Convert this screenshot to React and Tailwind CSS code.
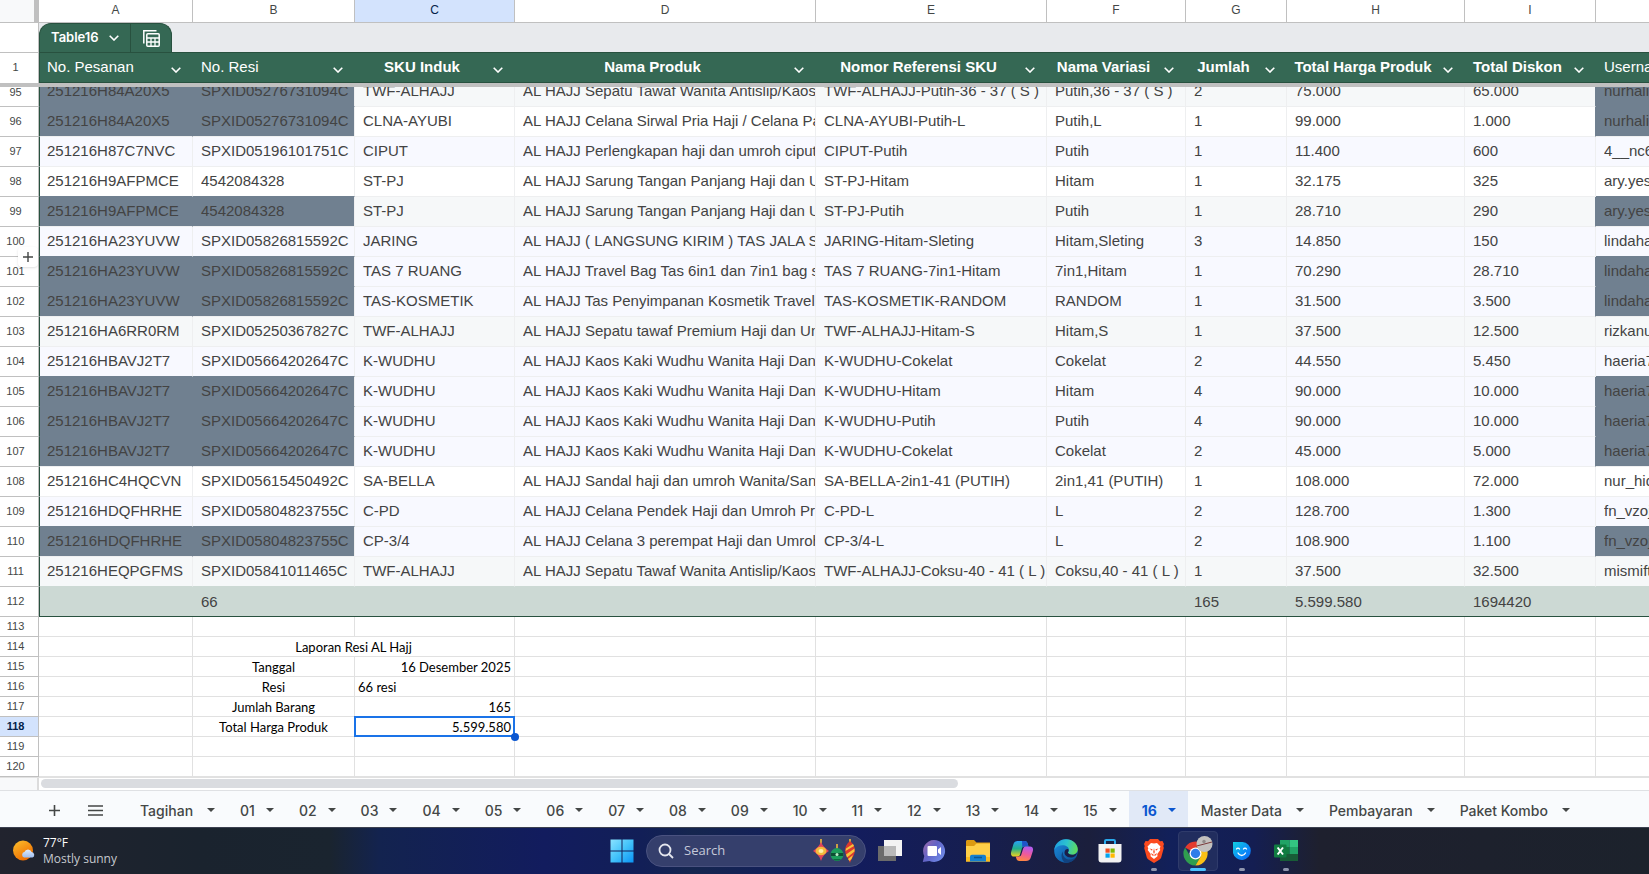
import clsx from 'clsx'

const columns = [
  { id: 'A', label: 'No. Pesanan', width: 'w-[154px]' },
  { id: 'B', label: 'No. Resi', width: 'w-[162px]' },
  { id: 'C', label: 'SKU Induk', width: 'w-[160px]', bold: true },
  { id: 'D', label: 'Nama Produk', width: 'w-[301px]', bold: true },
  { id: 'E', label: 'Nomor Referensi SKU', width: 'w-[231px]', bold: true },
  { id: 'F', label: 'Nama Variasi', width: 'w-[139px]', bold: true },
  { id: 'G', label: 'Jumlah', width: 'w-[101px]', bold: true },
  { id: 'H', label: 'Total Harga Produk', width: 'w-[178px]', bold: true },
  { id: 'I', label: 'Total Diskon', width: 'w-[131px]', bold: true },
  { id: 'J', label: 'Username (Pembeli)', width: 'w-[180px]' },
]

const bands = {
  gray: 'bg-[#f6f8f9]',
  white: 'bg-white',
  lilac: 'bg-[#f8f9ff]',
}

// dup = same order number as the row above, its key cells are filled in slate
const orders = [
  { n: 95, band: 'gray', dup: true, cells: ['251216H84A20X5', 'SPXID05276731094C', 'TWF-ALHAJJ', 'AL HAJJ Sepatu Tawaf Wanita Antislip/Kaos', 'TWF-ALHAJJ-Putih-36 - 37 ( S )', 'Putih,36 - 37 ( S )', '2', '75.000', '65.000', 'nurhaliz'] },
  { n: 96, band: 'white', dup: true, cells: ['251216H84A20X5', 'SPXID05276731094C', 'CLNA-AYUBI', 'AL HAJJ Celana Sirwal Pria Haji / Celana Pa', 'CLNA-AYUBI-Putih-L', 'Putih,L', '1', '99.000', '1.000', 'nurhaliz'] },
  { n: 97, band: 'lilac', cells: ['251216H87C7NVC', 'SPXID05196101751C', 'CIPUT', 'AL HAJJ Perlengkapan haji dan umroh ciput', 'CIPUT-Putih', 'Putih', '1', '11.400', '600', '4__nc6'] },
  { n: 98, band: 'white', cells: ['251216H9AFPMCE', '4542084328', 'ST-PJ', 'AL HAJJ Sarung Tangan Panjang Haji dan U', 'ST-PJ-Hitam', 'Hitam', '1', '32.175', '325', 'ary.yes'] },
  { n: 99, band: 'gray', dup: true, cells: ['251216H9AFPMCE', '4542084328', 'ST-PJ', 'AL HAJJ Sarung Tangan Panjang Haji dan U', 'ST-PJ-Putih', 'Putih', '1', '28.710', '290', 'ary.yes'] },
  { n: 100, band: 'lilac', cells: ['251216HA23YUVW', 'SPXID05826815592C', 'JARING', 'AL HAJJ ( LANGSUNG KIRIM ) TAS JALA SA', 'JARING-Hitam-Sleting', 'Hitam,Sleting', '3', '14.850', '150', 'lindaha'] },
  { n: 101, band: 'lilac', dup: true, cells: ['251216HA23YUVW', 'SPXID05826815592C', 'TAS 7 RUANG', 'AL HAJJ Travel Bag Tas 6in1 dan 7in1 bag se', 'TAS 7 RUANG-7in1-Hitam', '7in1,Hitam', '1', '70.290', '28.710', 'lindaha'] },
  { n: 102, band: 'lilac', dup: true, cells: ['251216HA23YUVW', 'SPXID05826815592C', 'TAS-KOSMETIK', 'AL HAJJ Tas Penyimpanan Kosmetik Travel J', 'TAS-KOSMETIK-RANDOM', 'RANDOM', '1', '31.500', '3.500', 'lindaha'] },
  { n: 103, band: 'gray', cells: ['251216HA6RR0RM', 'SPXID05250367827C', 'TWF-ALHAJJ', 'AL HAJJ Sepatu tawaf Premium Haji dan Um', 'TWF-ALHAJJ-Hitam-S', 'Hitam,S', '1', '37.500', '12.500', 'rizkanu'] },
  { n: 104, band: 'lilac', cells: ['251216HBAVJ2T7', 'SPXID05664202647C', 'K-WUDHU', 'AL HAJJ Kaos Kaki Wudhu Wanita Haji Dan', 'K-WUDHU-Cokelat', 'Cokelat', '2', '44.550', '5.450', 'haeria7'] },
  { n: 105, band: 'lilac', dup: true, cells: ['251216HBAVJ2T7', 'SPXID05664202647C', 'K-WUDHU', 'AL HAJJ Kaos Kaki Wudhu Wanita Haji Dan', 'K-WUDHU-Hitam', 'Hitam', '4', '90.000', '10.000', 'haeria7'] },
  { n: 106, band: 'lilac', dup: true, cells: ['251216HBAVJ2T7', 'SPXID05664202647C', 'K-WUDHU', 'AL HAJJ Kaos Kaki Wudhu Wanita Haji Dan', 'K-WUDHU-Putih', 'Putih', '4', '90.000', '10.000', 'haeria7'] },
  { n: 107, band: 'lilac', dup: true, cells: ['251216HBAVJ2T7', 'SPXID05664202647C', 'K-WUDHU', 'AL HAJJ Kaos Kaki Wudhu Wanita Haji Dan', 'K-WUDHU-Cokelat', 'Cokelat', '2', '45.000', '5.000', 'haeria7'] },
  { n: 108, band: 'white', cells: ['251216HC4HQCVN', 'SPXID05615450492C', 'SA-BELLA', 'AL HAJJ Sandal haji dan umroh Wanita/Sand', 'SA-BELLA-2in1-41 (PUTIH)', '2in1,41 (PUTIH)', '1', '108.000', '72.000', 'nur_hid'] },
  { n: 109, band: 'lilac', cells: ['251216HDQFHRHE', 'SPXID05804823755C', 'C-PD', 'AL HAJJ Celana Pendek Haji dan Umroh Pria', 'C-PD-L', 'L', '2', '128.700', '1.300', 'fn_vzoj'] },
  { n: 110, band: 'lilac', dup: true, cells: ['251216HDQFHRHE', 'SPXID05804823755C', 'CP-3/4', 'AL HAJJ Celana 3 perempat Haji dan Umroh', 'CP-3/4-L', 'L', '2', '108.900', '1.100', 'fn_vzoj'] },
  { n: 111, band: 'gray', cells: ['251216HEQPGFMS', 'SPXID05841011465C', 'TWF-ALHAJJ', 'AL HAJJ Sepatu Tawaf Wanita Antislip/Kaos', 'TWF-ALHAJJ-Coksu-40 - 41 ( L )', 'Coksu,40 - 41 ( L )', '1', '37.500', '32.500', 'mismift'] },
]

const totals = ['', '66', '', '', '', '', '165', '5.599.580', '1694420', '']

const report = [
  { n: 113 },
  { n: 114, title: 'Laporan Resi AL Hajj' },
  { n: 115, label: 'Tanggal', value: '16 Desember 2025' },
  { n: 116, label: 'Resi', value: '66 resi', left: true },
  { n: 117, label: 'Jumlah Barang', value: '165' },
  { n: 118, label: 'Total Harga Produk', value: '5.599.580', selected: true },
  { n: 119 },
  { n: 120 },
]

const sheets = ['Tagihan', '01', '02', '03', '04', '05', '06', '07', '08', '09', '10', '11', '12', '13', '14', '15', '16', 'Master Data', 'Pembayaran', 'Paket Kombo']

function Chevron() {
  return (
    <svg width="10" height="6" viewBox="0 0 10 6" fill="none" stroke="currentColor" strokeWidth="1.6">
      <path d="M.7.7 5 5 9.3.7" />
    </svg>
  )
}

function RowNumber({ children, selected, className }) {
  return (
    <th
      scope="row"
      className={clsx(
        'relative border-r border-b border-[#c0c0c0] pr-[7px] text-center text-[11px] leading-none',
        selected ? 'bg-[#d3e3fd] font-bold text-[#041e49]' : 'bg-white font-normal text-[#444746]',
        className
      )}
    >
      {children}
    </th>
  )
}

function OrderRow({ order, next, clipped }) {
  const isKey = (i) => i === 0 || i === 1 || i === 9
  return (
    <tr className={clipped ? 'h-5' : 'h-[30px]'}>
      <RowNumber>
        {clipped ? <div className="flex h-[19px] items-start justify-center">{order.n}</div> : order.n}
        {order.n === 100 && (
          <button
            aria-label="Add row"
            className="absolute top-5 left-[18px] z-10 flex size-5 items-center justify-center rounded-sm bg-white text-[#444746] shadow"
          >
            <svg width="10" height="10" viewBox="0 0 10 10" stroke="currentColor" strokeWidth="1.4">
              <path d="M5 0v10M0 5h10" />
            </svg>
          </button>
        )}
      </RowNumber>
      {order.cells.map((text, i) => {
        const slate = order.dup && isKey(i)
        return (
          <td
            key={i}
            className={clsx(
              'overflow-hidden border-r border-b whitespace-nowrap',
              i === 0 ? 'border-l border-l-[#28513f] pl-[7px]' : 'pl-2',
              slate ? 'bg-[#708090]' : bands[order.band],
              (i === 0 || i === 8) && order.dup ? 'border-r-[#708090]' : 'border-r-[#eeeff0]',
              isKey(i) && next?.dup ? 'border-b-[#708090]' : next ? 'border-b-[#eeeff0]' : 'border-b-[#ccd9d4]'
            )}
          >
            <div className={clsx('flex items-end overflow-hidden pb-0.5', clipped ? 'h-[19px]' : 'h-[29px]')}>
              <span className="leading-[27px]">{text}</span>
            </div>
          </td>
        )
      })}
    </tr>
  )
}

function ReportRow({ row }) {
  const cell = 'border-r border-b border-[#e1e1e1]'
  const text = "pt-px font-['Lato',sans-serif] text-[13px] leading-[18px] text-black"
  return (
    <tr className="h-5">
      <RowNumber selected={row.selected}>{row.n}</RowNumber>
      <td className={cell}></td>
      {row.title ? (
        <td colSpan={2} className={clsx(cell, text, 'text-center')}>{row.title}</td>
      ) : (
        <>
          <td className={clsx(cell, text, 'text-center')}>{row.label}</td>
          <td className={clsx(cell, text, 'relative px-[3px]', row.left ? 'text-left' : 'text-right')}>
            {row.value}
            {row.selected && (
              <>
                <div className="absolute -inset-px border-2 border-[#1a73e8]"></div>
                <div className="absolute -right-[5px] -bottom-[5px] z-10 size-2 rounded-full bg-[#0b57d0]"></div>
              </>
            )}
          </td>
        </>
      )}
      {columns.slice(3).map((c) => (
        <td key={c.id} className={cell}></td>
      ))}
    </tr>
  )
}

function Sheet() {
  return (
    <div className="overflow-hidden">
      <table className="w-full table-fixed border-separate border-spacing-0 font-['Liberation_Sans',Arial,sans-serif] text-[15px] text-[#434343]">
        <colgroup>
          <col className="w-[39px]" />
          {columns.map((c) => (
            <col key={c.id} className={c.width} />
          ))}
        </colgroup>
        <thead>
          <tr className="h-[23px]">
            <td className="border-r-5 border-b border-r-[#c0c0c0] border-b-[#c0c0c0] bg-[#f8f9fa]"></td>
            {columns.map((c) => (
              <th
                key={c.id}
                scope="col"
                className={clsx(
                  'border-r border-b border-[#c0c0c0] pb-0.5 text-[12px] leading-none font-normal',
                  c.id === 'C' ? 'bg-[#d3e3fd] text-[#041e49]' : 'bg-white text-[#444746]'
                )}
              >
                {c.id}
              </th>
            ))}
          </tr>
          <tr className="h-[29px]">
            <td className="border-r border-[#c0c0c0] bg-white"></td>
            <td colSpan={10} className="bg-[#e8eaed]">
              <div className="flex h-[29px] w-[133px] overflow-hidden rounded-t-xl border-x border-t border-[#28513f] bg-[#356854] text-white">
                <button className="flex w-[91px] items-center justify-between border-r border-[#28513f] pr-[11px] pl-[11px] font-['Inter',sans-serif] text-[13px] font-semibold">
                  Table16
                  <Chevron />
                </button>
                <button aria-label="Table view" className="flex flex-1 items-center justify-center">
                  <svg width="17" height="17" viewBox="0 0 17 17" fill="none" stroke="currentColor" strokeWidth="1.5">
                    <path d="M.8 13.5V.8h12.7" />
                    <rect x="3.8" y="3.8" width="12.4" height="12.4" rx="1" />
                    <path d="M3.8 8h12.4M3.8 12h12.4M8 8v8M12 8v8" strokeWidth="1.3" />
                  </svg>
                </button>
              </div>
            </td>
          </tr>
          <tr className="h-[31px]">
            <th scope="row" className="border-t border-r border-[#c0c0c0] bg-white pr-[7px] pb-0.5 text-center text-[11px] leading-none font-normal text-[#444746]">1</th>
            {columns.map((c, i) => (
              <th
                key={c.id}
                scope="col"
                className={clsx(
                  'overflow-hidden border-y border-[#28513f] bg-[#356854] pr-3 pb-0.5 whitespace-nowrap text-white',
                  i === 0 ? 'border-l pl-[7px]' : !c.bold && 'pl-2'
                )}
              >
                <div className={clsx('flex items-center leading-[27px]', c.bold ? 'font-bold' : 'font-normal')}>
                  <span className={clsx('flex-1', c.bold ? 'text-center' : 'text-left')}>{c.label}</span>
                  <button aria-label={`Menu ${c.label}`} className="pt-1.5 pl-1 leading-none">
                    <Chevron />
                  </button>
                </div>
              </th>
            ))}
          </tr>
          <tr className="h-1">
            <td colSpan={11} className="bg-[#c0c0c0]"></td>
          </tr>
        </thead>
        <tbody>
          {orders.map((order, i) => (
            <OrderRow key={order.n} order={order} next={orders[i + 1]} clipped={i === 0} />
          ))}
          <tr className="h-[30px]">
            <RowNumber>112</RowNumber>
            {totals.map((text, i) => (
              <td
                key={i}
                className={clsx(
                  'border-b border-[#28513f] bg-[#ccd9d4] leading-none',
                  i === 0 ? 'border-l pl-[7px]' : 'pl-2'
                )}
              >
                {text}
              </td>
            ))}
          </tr>
          {report.map((row) => (
            <ReportRow key={row.n} row={row} />
          ))}
        </tbody>
      </table>
    </div>
  )
}

function SheetTabs() {
  return (
    <nav className="flex h-9 overflow-hidden bg-[#f9fbfd] pl-9 font-['Inter',sans-serif] text-[14px] font-medium text-[#444746]">
      <button aria-label="Add sheet" className="flex w-[37px] shrink-0 items-center justify-center pt-0.5">
        <svg width="11" height="11" viewBox="0 0 11 11" stroke="currentColor" strokeWidth="1.6">
          <path d="M5.5 0v11M0 5.5h11" />
        </svg>
      </button>
      <button aria-label="All sheets" className="flex w-11 shrink-0 items-center justify-center pt-0.5">
        <svg width="15" height="11" viewBox="0 0 15 11" stroke="currentColor" strokeWidth="1.5">
          <path d="M0 1h15M0 5.500h15M0 10h15" />
        </svg>
      </button>
      <div className="ml-2.5 flex">
        {sheets.map((name) => (
          <button
            key={name}
            className={clsx(
              'flex shrink-0 items-center pr-3 pl-[13px] pt-0.5 whitespace-nowrap',
              name.length > 2 ? 'gap-3.5' : 'gap-[11px]',
              name === '16' && 'bg-[#e1e9f7] font-bold text-[#0b57d0]'
            )}
          >
            {name}
            <svg width="8" height="4" viewBox="0 0 8 4" fill="currentColor">
              <path d="M0 0h8L4 4z" />
            </svg>
          </button>
        ))}
      </div>
    </nav>
  )
}

function WeatherIcon() {
  return (
    <svg width="24" height="24" viewBox="0 0 24 24">
      <defs>
        <linearGradient id="sun" x1="0" y1="0" x2=".6" y2="1">
          <stop offset="0" stopColor="#fbc02d" />
          <stop offset="1" stopColor="#ef6c00" />
        </linearGradient>
        <linearGradient id="cloud" x1="0" y1="0" x2="0" y2="1">
          <stop offset="0" stopColor="#e3edfb" />
          <stop offset="1" stopColor="#9dbdf0" />
        </linearGradient>
      </defs>
      <circle cx="11" cy="11.500" r="10" fill="url(#sun)" />
      <path d="M12 18.500a2.800 2.800 0 0 1 .4-5.400 3.800 3.800 0 0 1 7.200 0 2.800 2.800 0 0 1 .9 5.400z" fill="url(#cloud)" />
    </svg>
  )
}

function WindowsIcon() {
  return (
    <svg width="24" height="24" viewBox="0 0 24 24">
      <defs>
        <linearGradient id="win" x1="0" y1="0" x2="1" y2="1">
          <stop offset="0" stopColor="#8be3ff" />
          <stop offset=".5" stopColor="#43c3fb" />
          <stop offset="1" stopColor="#0a93f5" />
        </linearGradient>
      </defs>
      <path d="M.5.5h11v11H.5zM12.500.5h11v11h-11zM.5 12.500h11v11H.5zM12.500 12.500h11v11h-11z" fill="url(#win)" />
    </svg>
  )
}

function Ornaments() {
  return (
    <svg width="44" height="24" viewBox="0 0 44 24">
      <path d="M8 0v5" stroke="#caa045" strokeWidth="2" />
      <path d="M8 3c1.500 3.500 4 6 8 9-3.500 2-6.500 5-8 10-1.500-5-4.500-8-8-10 4-3 6.500-5.500 8-9z" fill="#e0435a" />
      <ellipse cx="8" cy="12" rx="5.500" ry="4.300" fill="#f3bb3c" />
      <ellipse cx="8" cy="12" rx="2.500" ry="2" fill="#fdf0a8" />
      <path d="M24 5v5" stroke="#caa045" strokeWidth="2" />
      <circle cx="24" cy="15.500" r="6.500" fill="#1c9d5c" />
      <path d="M17.800 14h12.400v3H17.800z" fill="#0c4f33" />
      <circle cx="24" cy="15.500" r="1.500" fill="#b8f0c8" />
      <path d="M20 20c2 2 6 2 8 0z" fill="#0c6b40" />
      <path d="M37 0v4" stroke="#caa045" strokeWidth="2" />
      <path d="M37 2c3.500 3 5.200 6 4.800 10-.3 5-3.300 7-4.800 12-1.500-5-4.500-7-4.800-12C31.800 8 33.500 5 37 2z" fill="#dc3a2f" />
      <path d="M33 9.500 40 5l1 2-8.500 5zM33 15.500l8.500-6v3l-7.500 6zM35 20l5-4-1.500 4-2 2z" fill="#f7c33b" />
    </svg>
  )
}

function TaskViewIcon() {
  return (
    <svg width="24" height="24" viewBox="0 0 24 24">
      <path d="M6 1h18v16H6z" fill="#f3f3f3" />
      <path d="M0 7h18v15H0z" fill="#6b6b6b" />
      <path d="M6 7h12v10H6z" fill="#b9b9b9" />
    </svg>
  )
}

function ChatIcon() {
  return (
    <svg width="24" height="24" viewBox="0 0 24 24">
      <defs>
        <linearGradient id="chat" x1="0" y1="0" x2="1" y2=".7">
          <stop offset="0" stopColor="#a06aa8" />
          <stop offset=".5" stopColor="#6264c7" />
          <stop offset="1" stopColor="#6f8be8" />
        </linearGradient>
      </defs>
      <path d="M12 1a11 11 0 1 1-4.500 21L.8 23l1.500-6A11 11 0 0 1 12 1z" fill="url(#chat)" />
      <rect x="5.500" y="7" width="9.500" height="10" rx="1" fill="#fff" />
      <path d="M16 10.500 19 8v8l-3-2.500z" fill="#fff" />
    </svg>
  )
}

function FolderIcon() {
  return (
    <svg width="24" height="24" viewBox="0 0 24 24">
      <path d="M0 2.500C0 1.500.7 1 1.500 1H8l2.500 2.500H24V8H0z" fill="#dc9a12" />
      <path d="M0 7h8l2.500-2.500H24v18H0z" fill="#ffcf48" />
      <path d="M0 18h24v4.500H0z" fill="#f9bb20" />
      <path d="M4 22.500V18c0-1.500.8-2.300 2-2.300h12c1.200 0 2 .8 2 2.300v4.500z" fill="#1580cf" />
      <path d="M8 18.500h8" stroke="#0a5694" strokeWidth="1.500" />
    </svg>
  )
}

function CopilotIcon() {
  return (
    <svg width="24" height="24" viewBox="0 0 24 24">
      <defs>
        <linearGradient id="cpa" x1="0" y1="0" x2="0" y2="1">
          <stop offset="0" stopColor="#2aa2f5" />
          <stop offset=".5" stopColor="#22b08a" />
          <stop offset="1" stopColor="#f0d21c" />
        </linearGradient>
        <linearGradient id="cpb" x1=".6" y1="0" x2=".3" y2="1">
          <stop offset="0" stopColor="#b45cf0" />
          <stop offset=".5" stopColor="#ef5a9a" />
          <stop offset="1" stopColor="#ff8a3c" />
        </linearGradient>
      </defs>
      <path d="M8 2h6.500c2 0 2.700 1 3.300 3l.7 2.500h-4c-1.500 0-2.300.8-2.700 2.200l-1.700 5.500c-.4 1.300-1 2.300-2.600 2.300H4c-2.500 0-3.600-2-2.800-4.800l2.200-7.500C4.100 3 5.500 2 8 2z" fill="url(#cpa)" />
      <path d="M12 2h2.500c2 0 2.700 1 3.300 3l.7 2.500h-4c-1 0-1.800.4-2.200 1.200z" fill="#1f55c8" />
      <path d="M16 22H9.500c-2 0-2.700-1-3.300-3l-.5-1.500h3c1.600 0 2.300-.8 2.700-2.200l1.700-5.500c.4-1.300 1-2.300 2.600-2.300H20c2.500 0 3.600 2 2.800 4.800l-2.200 6.700C19.900 21 18.500 22 16 22z" fill="url(#cpb)" />
    </svg>
  )
}

function EdgeIcon() {
  return (
    <svg width="24" height="24" viewBox="0 0 24 24">
      <defs>
        <linearGradient id="edgeTop" x1="0" y1=".3" x2="1" y2=".5">
          <stop offset="0" stopColor="#1f9fe0" />
          <stop offset=".5" stopColor="#2cc3cf" />
          <stop offset="1" stopColor="#5fdc5a" />
        </linearGradient>
        <linearGradient id="edgeLow" x1="0" y1="0" x2="1" y2="1">
          <stop offset="0" stopColor="#1b8fe0" />
          <stop offset="1" stopColor="#0c4a90" />
        </linearGradient>
      </defs>
      <circle cx="12" cy="12" r="11.800" fill="url(#edgeLow)" />
      <path d="M.3 11C1 4.500 6 .2 12 .2c6.600 0 11.800 4.600 11.800 10 0 3.400-2.800 5.600-5.800 5.600-2.400 0-4.500-.9-4-2.300.9-1 1.200-1.800 1-3C14.600 8 12 6.200 8.700 6.200 5 6.200 1.700 8 .3 11z" fill="url(#edgeTop)" />
      <path d="M9 12.500c-1 5 3 8.500 7.500 8 2.300-.2 4.300-1.200 5.500-2.300-2 3.600-6 5.600-10 5.600-4-1-6-8-3-11.300z" fill="#11427f" />
      <path d="M14.500 10.500c.5 1.800-1 2.500-.5 3.300.5 1.200 2.400 2 4 2 2 0 4-.9 5-2.300-.5 3-3 5-6.200 5-4.300 0-7.300-3-6-6.500.6-1.600 2.600-2.500 3.700-1.500z" fill="#1b1f48" />
    </svg>
  )
}

function StoreIcon() {
  return (
    <svg width="24" height="24" viewBox="0 0 24 24">
      <path d="M7 6V2.200C7 1.500 7.500 1 8.200 1h7.600c.7 0 1.200.5 1.200 1.200V6" fill="none" stroke="#29a9ec" strokeWidth="2" />
      <path d="M.5 5h23v15.500a3 3 0 0 1-3 3h-17a3 3 0 0 1-3-3z" fill="#f2f2f2" />
      <path d="M7.500 9.500h4.200v4.200H7.500z" fill="#f04e23" />
      <path d="M12.500 9.500h4.200v4.200h-4.200z" fill="#7fb900" />
      <path d="M7.500 14.500h4.200v4.200H7.500z" fill="#02a4ef" />
      <path d="M12.500 14.500h4.200v4.200h-4.200z" fill="#ffb900" />
    </svg>
  )
}

function BraveIcon() {
  return (
    <svg width="24" height="24" viewBox="0 0 24 24">
      <path d="M8 0h8l2 2.200 2.500-.2L22 5l-.7 2 .5 2-2.600 9.500c-.3 1-1 1.700-1.900 2.300L12 24l-5.300-3.200c-.9-.6-1.600-1.300-1.900-2.300L2.200 9l.5-2L2 5l1.500-3 2.500.2z" fill="#fb4a1f" />
      <path d="M12 4.500 15 4l3.500 3.500-.8 2 .6 1.500-3 4 .2 2.200-3.500 2.800-3.500-2.800.2-2.200-3-4 .6-1.500-.8-2L9 4z" fill="#fff" />
      <path d="M7.500 9.500l3 .8-.5 1.500zM16.500 9.500l-3 .8.5 1.500zM12 9l.8 4L12 15l-.8-2zM9 14l3 2 3-2-1 2.500h-4z" fill="#fb4a1f" />
    </svg>
  )
}

function ChromeIcon() {
  return (
    <svg width="30" height="30" viewBox="0 0 30 30">
      <path d="M12.500 17.500 2.100 11.500A12 12 0 0 1 22.900 11.500H12.500z" fill="#e33b2e" />
      <path d="M12.500 17.500 7.300 20.500 2.100 11.500A12 12 0 0 0 12.500 29.500l5.200-9z" fill="#2f9e4f" />
      <path d="M12.500 11.500h10.400A12 12 0 0 1 12.500 29.500l5.200-9z" fill="#fbc116" />
      <circle cx="12.500" cy="17.500" r="6" fill="#fff" />
      <circle cx="12.500" cy="17.500" r="4.700" fill="#2f7de9" />
      <circle cx="21.500" cy="8" r="8" fill="#c3c1be" />
      <path d="M13.700 10 29 6" stroke="#7a3a3a" strokeWidth="1" />
      <circle cx="21" cy="5.500" r="1.700" fill="#8f8a88" />
    </svg>
  )
}

function FaceIcon() {
  return (
    <svg width="20" height="20" viewBox="0 0 20 20">
      <defs>
        <linearGradient id="face" x1="0" y1="0" x2="1" y2="1">
          <stop offset="0" stopColor="#12cfe0" />
          <stop offset=".6" stopColor="#0a8cf8" />
          <stop offset="1" stopColor="#0a63f0" />
        </linearGradient>
      </defs>
      <path d="M1 1h9.500A9 9 0 1 1 1 12z" fill="url(#face)" />
      <path d="M4.500 8c.7-1.300 2.300-1.300 3 0M11.500 8c.7-1.300 2.300-1.300 3 0M6 12c1.500 3.300 6 3.300 7.500 0" fill="none" stroke="#fff" strokeWidth="1.300" strokeLinecap="round" />
    </svg>
  )
}

function ExcelIcon() {
  return (
    <svg width="24" height="24" viewBox="0 0 24 24">
      <path d="M6 1h9.500v7H6z" fill="#21a366" />
      <path d="M15.500 1H24v7h-8.500z" fill="#33c481" />
      <path d="M6 8h9.500v7H6z" fill="#107c41" />
      <path d="M15.500 8H24v7h-8.500z" fill="#21a366" />
      <path d="M6 15h18v7H6z" fill="#185c37" />
      <rect y="5.500" width="12.500" height="13" rx="1" fill="#107c41" />
      <path d="M3.600 8.500 9 15.500M9 8.500l-5.400 7" stroke="#fff" strokeWidth="2" />
    </svg>
  )
}

const apps = [
  { name: 'Task View', Icon: TaskViewIcon },
  { name: 'Chat', Icon: ChatIcon },
  { name: 'File Explorer', Icon: FolderIcon },
  { name: 'Copilot', Icon: CopilotIcon },
  { name: 'Edge', Icon: EdgeIcon },
  { name: 'Store', Icon: StoreIcon },
  { name: 'Brave', Icon: BraveIcon, running: true },
  { name: 'Chrome', Icon: ChromeIcon, running: true, active: true },
  { name: 'Assistant', Icon: FaceIcon, running: true },
  { name: 'Excel', Icon: ExcelIcon, running: true },
]

function Taskbar() {
  return (
    <footer className="flex h-[47px] items-center border-t border-[#3c4150] bg-[linear-gradient(90deg,#21232e_0%,#1a232e_12%,#1a242f_20%,#13234f_23%,#121c5e_33%,#121f57_39%,#15264f_42%,#121c60_50%,#161e50_59%,#1b1f3c_66%,#12205a_71%,#141e52_76%,#1e202e_80%,#1c222c_100%)] font-['Open_Sans',sans-serif] text-white">
      <button className="flex w-[600px] items-center gap-[7px] pl-3 text-left text-[12px] leading-4">
        <WeatherIcon />
        <span>
          <span className="block">77°F</span>
          <span className="block text-[#c6c9ce]">Mostly sunny</span>
        </span>
      </button>
      <button aria-label="Start" className="flex w-[43px] shrink-0 items-center justify-center">
        <WindowsIcon />
      </button>
      <label className="mr-0.5 ml-[3px] flex h-8 w-[220px] shrink-0 items-center gap-2.5 rounded-full border border-[#4a5280] bg-[#353f6c] pr-2 pl-[11px]">
        <svg width="16" height="16" viewBox="0 0 16 16" fill="none" stroke="#e4e6ee" strokeWidth="1.800">
          <circle cx="7" cy="7" r="5.500" />
          <path d="m11 11 4 4" />
        </svg>
        <input
          type="text"
          placeholder="Search"
          aria-label="Search"
          className="w-0 flex-1 bg-transparent text-[13px] placeholder:text-[#c5c9d9]"
        />
        <Ornaments />
      </label>
      {apps.map(({ name, Icon, running, active }) => (
        <button key={name} aria-label={name} className="relative flex h-10 w-11 shrink-0 items-center justify-center">
          {active && <span className="absolute inset-x-0.5 inset-y-0 rounded-sm border border-[#2f3b6b] bg-[#212d5e]"></span>}
          <span className="relative">
            <Icon />
          </span>
          {running && (
            <span
              className={clsx(
                'absolute bottom-0 h-[3px] rounded-full',
                active ? 'w-4 bg-[#4cc2ff]' : 'w-1.5 bg-[#8f96ae]'
              )}
            ></span>
          )}
        </button>
      ))}
    </footer>
  )
}

export default function App() {
  return (
    <div className="flex min-h-screen flex-col overflow-hidden bg-white">
      <Sheet />
      <div className="flex h-[13px] border-t border-[#e1e1e1]">
        <div className="w-[39px] border-r-2 border-[#dcdcdc] bg-[#f8f9fa]"></div>
        <div className="flex-1 pt-px pl-0.5">
          <div className="h-[9px] w-[57%] rounded-full bg-[#dadce0]"></div>
        </div>
      </div>
      <div className="border-t border-[#dfe1e4]">
        <SheetTabs />
      </div>
      <Taskbar />
    </div>
  )
}
